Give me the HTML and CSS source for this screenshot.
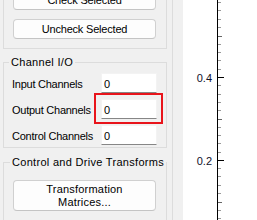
FILE: index.html
```html
<!DOCTYPE html>
<html lang="en">

<head>
  <meta charset="UTF-8">
  <title>Channel I/O</title>
  <link rel="stylesheet" href="styles.css">
</head>

<body>
  <div class="sidebar">
    <div class="panel">
      <fieldset class="group group-top">
        <button class="btn">Check Selected</button>
        <button class="btn">Uncheck Selected</button>
      </fieldset>

      <fieldset class="group group-io">
        <legend>Channel I/O</legend>
        <div class="row">
          <label>Input Channels</label>
          <input type="text" value="0">
        </div>
        <div class="row highlighted">
          <label>Output Channels</label>
          <input type="text" value="0">
          <span class="marker"></span>
        </div>
        <div class="row">
          <label>Control Channels</label>
          <input type="text" value="0">
        </div>
      </fieldset>

      <fieldset class="group group-transforms">
        <legend>Control and Drive Transforms</legend>
        <button class="btn btn-tall">Transformation<br>Matrices...</button>
      </fieldset>
    </div>
  </div>

  <div class="plot">
    <svg width="74" height="220" viewBox="0 0 74 220">
      <g stroke="#9a9a9a" stroke-width="1">
        <line x1="34" y1="2.5" x2="38" y2="2.5" />
        <line x1="34" y1="10.5" x2="38" y2="10.5" />
        <line x1="34" y1="19.5" x2="38" y2="19.5" />
        <line x1="34" y1="27.5" x2="38" y2="27.5" />
        <line x1="34" y1="44.5" x2="38" y2="44.5" />
        <line x1="34" y1="52.5" x2="38" y2="52.5" />
        <line x1="34" y1="60.5" x2="38" y2="60.5" />
        <line x1="34" y1="69.5" x2="38" y2="69.5" />
        <line x1="34" y1="85.5" x2="38" y2="85.5" />
        <line x1="34" y1="94.5" x2="38" y2="94.5" />
        <line x1="34" y1="102.5" x2="38" y2="102.5" />
        <line x1="34" y1="110.5" x2="38" y2="110.5" />
        <line x1="34" y1="127.5" x2="38" y2="127.5" />
        <line x1="34" y1="135.5" x2="38" y2="135.5" />
        <line x1="34" y1="143.5" x2="38" y2="143.5" />
        <line x1="34" y1="152.5" x2="38" y2="152.5" />
        <line x1="34" y1="168.5" x2="38" y2="168.5" />
        <line x1="34" y1="176.5" x2="38" y2="176.5" />
        <line x1="34" y1="185.5" x2="38" y2="185.5" />
        <line x1="34" y1="193.5" x2="38" y2="193.5" />
        <line x1="34" y1="210.5" x2="38" y2="210.5" />
        <line x1="34" y1="218.5" x2="38" y2="218.5" />
      </g>
      <g stroke="#666" stroke-width="1">
        <line x1="34" y1="36.5" x2="39" y2="36.5" />
        <line x1="34" y1="119.5" x2="39" y2="119.5" />
        <line x1="34" y1="202.5" x2="39" y2="202.5" />
      </g>
      <g stroke="#000" stroke-width="1">
        <line x1="34.5" y1="0" x2="34.5" y2="220" />
        <line x1="34" y1="77.5" x2="41" y2="77.5" />
        <line x1="34" y1="160.5" x2="41" y2="160.5" />
      </g>
      <g class="tick-label" text-anchor="end">
        <text x="29" y="81.5">0.4</text>
        <text x="29" y="164.5">0.2</text>
      </g>
    </svg>
  </div>
</body>

</html>
```

FILE: styles.css
```css
body {
  margin: 0;
  padding: 0;
  display: flex;
  height: 220px;
  overflow: hidden;
  font-family: "Liberation Sans", Arial, sans-serif;
  font-size: 11px;
  color: #000;
}

.sidebar {
  flex: none;
  width: 183px;
  background: #f0f0f0;
}

.panel {
  box-sizing: border-box;
  width: 173px;
  height: 230px;
  margin-top: -10px;
  padding: 0 5px 0 3px;
  border-right: 1px solid #dcdcdc;
}

.group {
  margin: 0;
  border: 1px solid #dcdcdc;
  min-width: 0;
}

.group legend {
  margin-left: -3px;
  padding: 0 2px;
  line-height: 16px;
  letter-spacing: 0.3px;
  white-space: nowrap;
}

.group-top {
  display: flex;
  flex-direction: column;
  gap: 9px;
  border-top: none;
  padding: 0 10px 9px 9px;
}

.group-io {
  margin-top: 5px;
  padding: 3px 9px 2px 8px;
}

.group-transforms {
  margin-top: 6px;
  padding: 10px 10px 20px 9px;
}

.btn {
  height: 20px;
  padding: 0;
  font: inherit;
  letter-spacing: -0.2px;
  color: #000;
  background: #fdfdfd;
  border: 1px solid #d0d0d0;
  border-bottom-color: #c4c4c4;
  border-radius: 4px;
}

.btn-tall {
  width: 100%;
  height: 31px;
  line-height: 13px;
  letter-spacing: 0.2px;
}

.row {
  display: flex;
  align-items: center;
  justify-content: space-between;
  height: 20px;
  margin-bottom: 6px;
}

.row:last-child {
  margin-bottom: 0;
}

.row label {
  padding-top: 2px;
  letter-spacing: -0.25px;
  white-space: nowrap;
}

.row input {
  box-sizing: border-box;
  width: 56px;
  height: 20px;
  padding: 2px 0 0 2px;
  font: inherit;
  color: #000;
  background: #fff;
  border: 1px solid #f3f3f3;
  border-bottom: 1px solid #868686;
  outline: none;
}

.highlighted {
  position: relative;
}

.marker {
  position: absolute;
  top: -6px;
  right: -6px;
  width: 65px;
  height: 27px;
  border: 2px solid #e8141b;
  pointer-events: none;
}

.plot {
  flex: 1;
  background: #fff;
}

.plot svg {
  display: block;
}

.tick-label {
  font-family: "Liberation Sans", Arial, sans-serif;
  font-size: 11px;
  fill: #101028;
}
```
